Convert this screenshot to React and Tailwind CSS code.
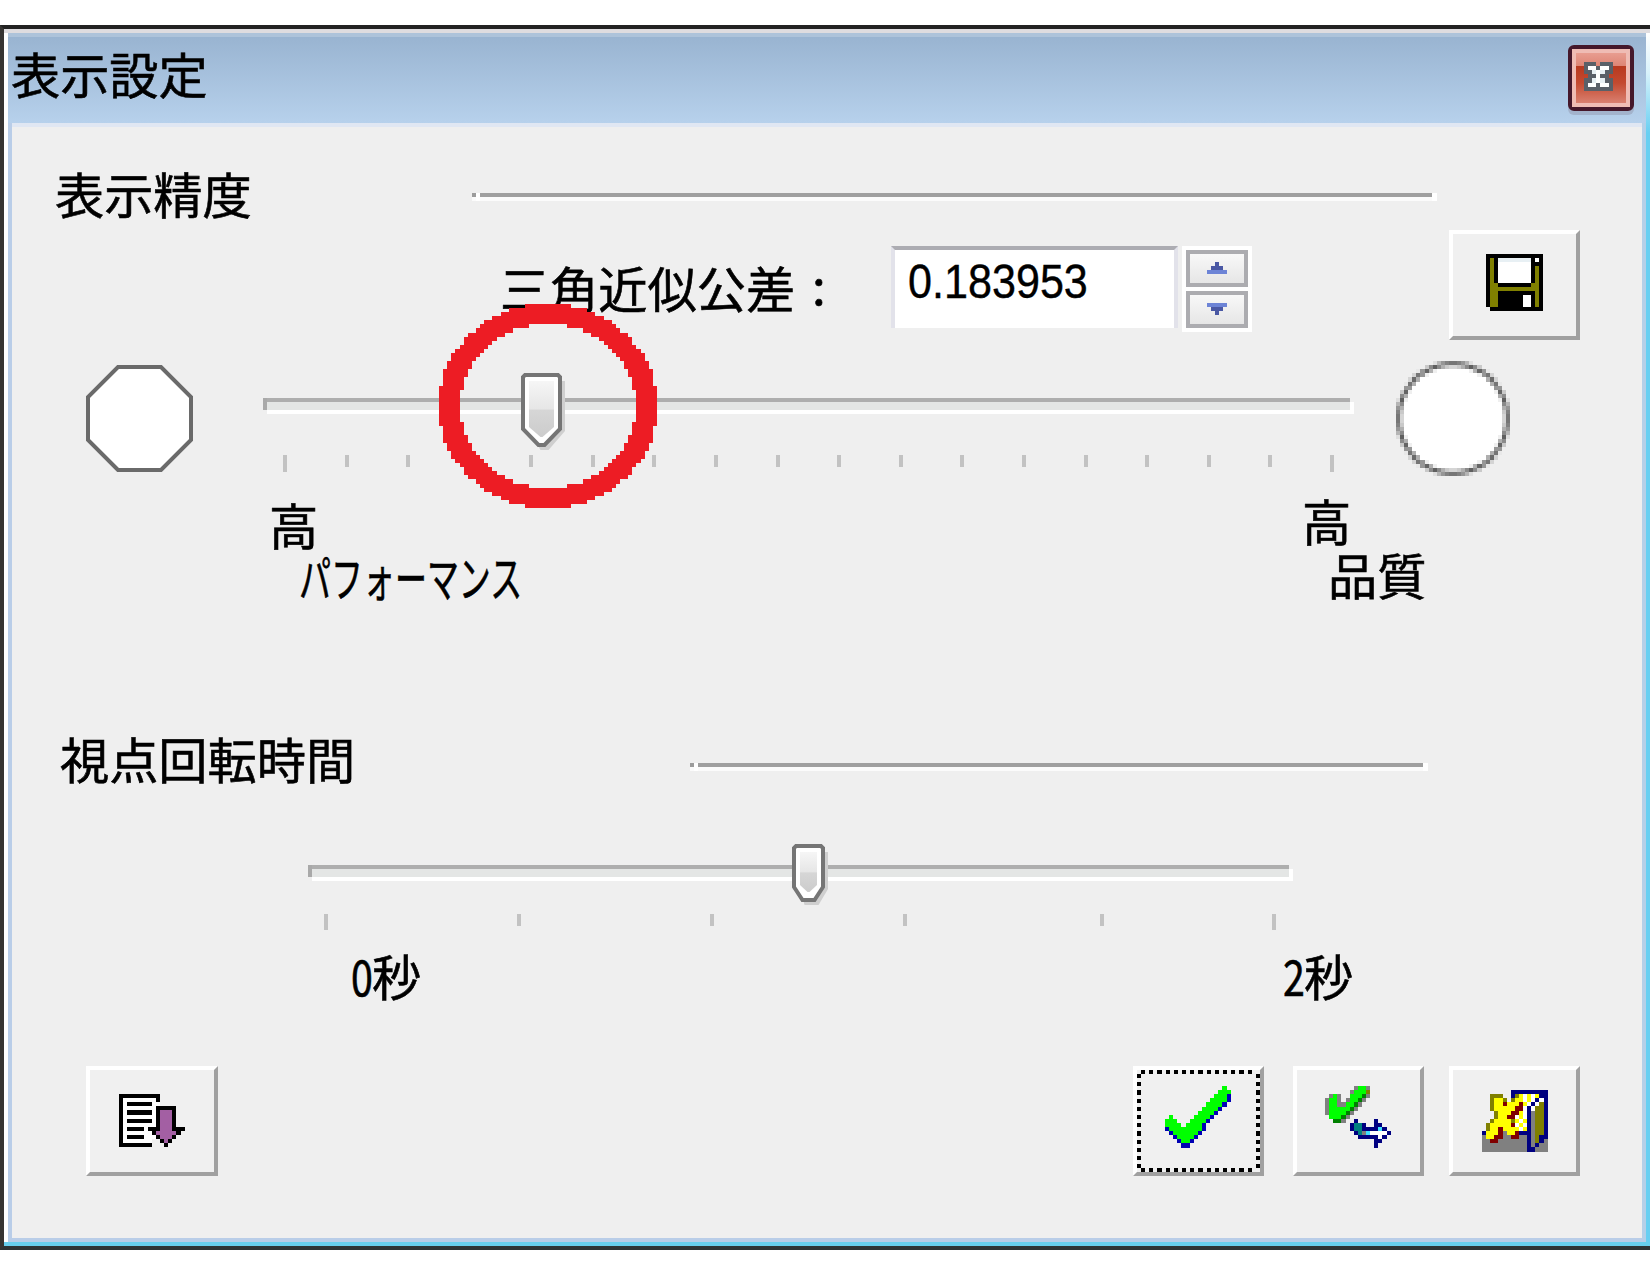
import React from 'react';

const CELL = 4.104;

const PALETTE = {
  K: '#000000', W: '#ffffff', O: '#808000', G: '#00ff00', B: '#0000b4', N: '#000080',
  P: '#a35fa3', Y: '#ffff00', R: '#800000', g: '#808080', D: '#008000', T: '#008080',
  C: '#40e0ff', S: '#5a6068', L: '#ffffa0', E: '#e8f0f4',
};

const SAVE = [
  'KKKKKKKKKKKKKK',
  'KOKEEEEEEEEKWK',
  'KOKWWWWWWWWKKK',
  'KOKWWWWWWWWKOK',
  'KOKWWWWWWWWKOK',
  'KOKWWWWWWWWKOK',
  'KOKWWWWWWWWKOK',
  'KOOKKKKKKKKOOK',
  'KOOOOOOOOOOOOK',
  'KOOKKKKKKKKKOK',
  'KOOKKKKKKWWKOK',
  'KOOKKKKKKWWKOK',
  'KOOKKKKKKWWKOK',
  '.KKKKKKKKKKKKK',
];

const LIST = [
  'KKKKKKKKKK......',
  'KWWWWWWWWK......',
  'KWKKKKKKWW......',
  'KWWWWWWWWKKKKK..',
  'KWKKKKKKWKPPPK..',
  'KWWWWWWWWKPPPK..',
  'KWKKKKKKWKPPPK..',
  'KWWWWWWWWKPPPK..',
  'KWKKKKWKKKPPPKKK',
  'KWWWWWWWKPPPPPK.',
  'KWKKKKWWWKPPPK..',
  'KWWWWWWW..KPK...',
  'KKKKKKKK...K....',
];

const CHECK = [
  '..............G.',
  '.............GGG',
  '............GGGB',
  '...........GGGGB',
  '..........GGGGB.',
  '.........GGGGB..',
  '........GGGGB...',
  '.G.....GGGGB....',
  'GGG...GGGGB.....',
  'GGGG.GGGGB......',
  'BGGGGGGGGB......',
  '.BGGGGGGB.......',
  '..BGGGGB........',
  '...BGGB.........',
  '....BB..........',
];

const APPLY = [
  '.......gGGg.....',
  '......gGGGO.....',
  '.gGg..GGGDg.....',
  'gGGg.gGGDg......',
  'gGGggGGDg.......',
  'gGGGGGDg........',
  'gGGGGDg.........',
  '.GGGDg..........',
  '..DDg..N....N...',
  '......NTTN..NN..',
  '......NTTNNNNCN.',
  '.......NTgCWWWWN',
  '........NNNNNWN.',
  '............NN..',
  '............N...',
];

const EXIT = [
  '.......NNNNNNNNN',
  '..OOO..NOYWYWYNN',
  '..OYYO.OYYWYWNWN',
  '..OYYRYYYRYWNWON',
  '..OYYYYYRRWNWOON',
  '...OYYYRRYWNgOON',
  '...OYYRRWYWNgOON',
  '..OYYYYOYWYNgOON',
  '.OYYYYYRWYWNgOON',
  '.OYYRYYYYWYNgOON',
  'NYYYRgYYRNNNgOON',
  'gYYRRggRRggNgONN',
  'ggRRgggggggNgONg',
  'gggggggggggNgNgg',
  'gggggggggggNNggg',
];

const CLOSE = [
  'SSS.SSS',
  'SWWSWWS',
  'SSEWESS',
  '.SSWSS.',
  'SSEWESS',
  'SWWSWWS',
  'SSSSSSS',
];

const UP = ['..N..', '.NNN.', 'MMMMM'];
const DOWN = ['MMMMM', '.NNN.', '..N..'];
const ARROW_COLORS = { N: '#4a58a4', M: '#6d84d6' };

function Pixels({ rows, colors = PALETTE, className = '' }) {
  const w = rows[0].length;
  const h = rows.length;
  const cells = [];
  rows.forEach((row, y) => {
    let x = 0;
    while (x < w) {
      const c = row[x];
      let end = x + 1;
      while (end < w && row[end] === c) end += 1;
      if (c !== '.') cells.push(<rect key={`${x}-${y}`} x={x} y={y} width={end - x} height="1" fill={colors[c]} />);
      x = end;
    }
  });
  return (
    <svg
      className={`shrink-0 ${className}`}
      width={w * CELL}
      height={h * CELL}
      viewBox={`0 0 ${w} ${h}`}
      preserveAspectRatio="none"
      shapeRendering="crispEdges"
    >
      {cells}
    </svg>
  );
}

/* Red ellipse ring built from square cells */
function Ring({ className }) {
  const cols = 53;
  const rows = 50;
  const cells = [];
  for (let y = 0; y < rows; y += 1) {
    for (let x = 0; x < cols; x += 1) {
      const dx = x + 0.5 - cols / 2;
      const dy = y + 0.5 - rows / 2;
      const outer = (dx / 26.6) ** 2 + (dy / 25.1) ** 2;
      const inner = (dx / 21.5) ** 2 + (dy / 20) ** 2;
      if (outer <= 1 && inner > 1) cells.push(<rect key={`${x}-${y}`} x={x} y={y} width="1" height="1" />);
    }
  }
  return (
    <svg className={className} viewBox={`0 0 ${cols} ${rows}`} preserveAspectRatio="none" shapeRendering="crispEdges" fill="#ed1c24">
      {cells}
    </svg>
  );
}

function Disc() {
  const n = 28;
  const cells = [];
  for (let y = 0; y < n; y += 1) {
    for (let x = 0; x < n; x += 1) {
      const d = Math.hypot(x + 0.5 - n / 2, y + 0.5 - n / 2);
      const stroke = Math.max(0, Math.min(1, 1.05 - Math.abs(d - 13.3)));
      const base = d < 13.3 ? 255 : 239;
      if (d < 13.3 || stroke > 0) {
        const v = Math.round(base + (95 - base) * stroke);
        cells.push(<rect key={`${x}-${y}`} x={x} y={y} width="1" height="1" fill={`rgb(${v},${v},${v})`} />);
      }
    }
  }
  return (
    <svg className="h-[115px] w-[114px] shrink-0" viewBox="0 0 28 28" preserveAspectRatio="none" shapeRendering="crispEdges">
      {cells}
    </svg>
  );
}

function Octagon() {
  return (
    <svg className="h-[107px] w-[107px] shrink-0" viewBox="0 0 107 107">
      <polygon points="32,2 75,2 105,32 105,75 75,105 32,105 2,75 2,32" fill="#fff" stroke="#6a6a6a" strokeWidth="4" />
    </svg>
  );
}

function Thumb({ className, w, h, cut, id, flat }) {
  const tip = w / 2;
  return (
    <svg className={className} viewBox={`0 0 ${w + 5} ${h + 5}`}>
      <defs>
        <linearGradient id={id} x1="0" y1="0" x2="0" y2="1">
          <stop offset="0" stopColor="#f6f6f6" />
          <stop offset="0.5" stopColor="#e6e6e6" />
          <stop offset="0.52" stopColor="#d6d6d6" />
          <stop offset="1" stopColor="#cccccc" />
        </linearGradient>
      </defs>
      <path d={`M8 8H${w + 3}V${h - cut + 2}L${tip + flat + 4} ${h + 3}H${tip - flat + 2}L8 ${h - cut}Z`} fill="#cfcfcf" />
      <path d={`M4 2H${w - 4}L${w - 2} 4V${h - cut}L${tip + flat} ${h - 2}H${tip - flat}L2 ${h - cut}V4Z`} fill="#fff" stroke="#757575" strokeWidth="4" />
      <path d={`M8 8H${w - 8}V${h - cut - 2}L${tip + 1} ${h - 10}H${tip - 1}L8 ${h - cut - 2}Z`} fill={`url(#${id})`} />
    </svg>
  );
}

const Text = ({ className = '', children }) => (
  <span className={`block h-[50px] shrink-0 whitespace-nowrap text-[49.2px] leading-[50px] [-webkit-text-stroke:0.6px_#000] ${className}`}>{children}</span>
);

const Rule = ({ className }) => (
  <div className={`flex h-2 shrink-0 ${className}`}>
    <div className="h-2 w-1 border-b-4 border-[#fbfbfb] bg-[#9c9c9c]" />
    <div className="h-2 w-1 bg-white" />
    <div className="h-2 flex-1 border-b-4 border-[#fbfbfb] bg-[#9f9f9f]" />
    <div className="h-2 w-[5px] bg-white" />
  </div>
);

const Track = ({ className }) => (
  <div className={`flex h-4 ${className}`}>
    <div className="h-3 w-1 bg-[#a9a9a9]" />
    <div className="h-4 flex-1 border-t-4 border-b-4 border-t-[#aeaeae] border-b-white bg-[#e4e6e5]" />
    <div className="mt-1 h-3 w-1 bg-white" />
  </div>
);

const PushButton = ({ className = '', children }) => (
  <button className={`relative flex h-[110px] w-[131px] shrink-0 border-4 border-t-white border-l-white border-r-[#a0a0a0] border-b-[#a0a0a0] bg-[#f0f0f0] ${className}`}>
    {children}
  </button>
);

const SpinButton = ({ rows }) => (
  <button className="flex h-[37px] w-[62px] items-center justify-center border-4 border-[#acacb0] bg-gradient-to-b from-[#f8f8f8] to-[#e6e6e6] outline-4 outline-white">
    <Pixels rows={rows} colors={ARROW_COLORS} />
  </button>
);

function TitleBar() {
  return (
    <header className="flex h-[90px] shrink-0 items-start justify-between border-t-4 border-[#adc3da] bg-gradient-to-b from-[#99b4d1] to-[#b7d1ec]">
      <Text className="mt-[11px] ml-[3px] text-black">表示設定</Text>
      <div className="mt-2 mr-3 h-[66px] w-[66px] rounded-md border-4 border-[#45182b] shadow-[0_4px_0_#a3b3cc]">
        <div className="flex h-full w-full items-start justify-start border-4 border-[#efbcb4] bg-[linear-gradient(to_bottom,#e89d90_0%,#dd8575_26%,#b8391f_27%,#c44a30_60%,#d98070_100%)] pt-[9px] pl-[8px]">
          <Pixels rows={CLOSE} />
        </div>
      </div>
    </header>
  );
}

function PrecisionSection() {
  return (
    <section className="h-[497px] shrink-0">
      <div className="flex h-[95px] items-start">
        <Text className="mt-[41px] ml-[43px] w-[417px]">表示精度</Text>
        <Rule className="mt-[66px] w-[965px]" />
      </div>

      <div className="flex h-[124px] items-start">
        <Text className="mt-[40px] ml-[488px] w-[312px]">三角近似公差</Text>
        <Text className="mt-[37px] w-[79px]">:</Text>
        <div className="mt-6 h-[82px] w-[287px] shrink-0 border-x-4 border-t-4 border-x-[#e2e2ea] border-t-[#acacb2] bg-white pl-[13px]">
          <div className="mt-[4px] w-[200px] origin-left scale-x-[0.88] font-['Liberation_Sans',sans-serif] text-[49px] leading-[54px] [-webkit-text-stroke:0.4px_#000]">0.183953</div>
        </div>
        <div className="mt-7 ml-2 flex h-[78px] w-[62px] shrink-0 flex-col gap-1">
          <SpinButton rows={UP} />
          <SpinButton rows={DOWN} />
        </div>
        <PushButton className="mt-2 ml-[201px] pt-5 pl-[33px]">
          <Pixels rows={SAVE} />
        </PushButton>
      </div>

      <div className="flex h-[144px] items-start">
        <div className="mt-[19px] ml-[74px] w-[177px] shrink-0">
          <Octagon />
        </div>
        <div className="relative h-full w-[1091px] shrink-0 pt-[52px]">
          <Track className="w-full" />
          <div className="mt-[41px] ml-5 flex w-[1051px] justify-between">
            {Array.from({ length: 18 }, (_, i) => (
              <div key={i} className={i === 0 || i === 17 ? 'h-[17px] w-1 bg-[#c2c2c2]' : 'h-3 w-1 bg-[#c2c2c2]'} />
            ))}
          </div>
          <Thumb id="precision-thumb" w={41} h={74} cut={18} flat={3} className="absolute top-[27px] left-[258px] h-[79px] w-[46px]" />
          <Ring className="absolute top-[-42px] left-[176px] h-[204px] w-[218px]" />
        </div>
        <div className="mt-[15px] ml-[42px]">
          <Disc />
        </div>
      </div>

      <div className="flex h-[130px] items-start">
        <div className="ml-[257px] w-[1033px] shrink-0">
          <Text className="mt-[9px]">高</Text>
          <Text className="mt-[2px] ml-[30px] origin-left scale-x-[0.65]">パフォーマンス</Text>
        </div>
        <div>
          <Text className="mt-[5px]">高</Text>
          <Text className="mt-[4px] ml-[26px]">品質</Text>
        </div>
      </div>
    </section>
  );
}

const TIME_TICKS = [
  { gap: 'ml-4', tall: true },
  { gap: 'ml-[189px]' },
  { gap: 'ml-[189px]' },
  { gap: 'ml-[189px]' },
  { gap: 'ml-[193px]' },
  { gap: 'ml-[168px]', tall: true },
];

function RotationSection() {
  return (
    <section className="h-[442px] shrink-0">
      <div className="flex h-[176px] items-start">
        <Text className="mt-[109px] ml-[48px] w-[630px]">視点回転時間</Text>
        <Rule className="mt-[139px] w-[738px]" />
      </div>
      <div className="relative ml-[296px] h-[140px] w-[985px] pt-[65px]">
        <Track className="w-full" />
        <div className="mt-[33px] flex">
          {TIME_TICKS.map((t, i) => (
            <div key={i} className={`${t.gap} w-1 bg-[#c2c2c2] ${t.tall ? 'h-4' : 'h-3'}`} />
          ))}
        </div>
        <Thumb id="time-thumb" w={33} h={58} cut={15} flat={6} className="absolute top-[44px] left-[484px] h-[63px] w-[38px]" />
      </div>
      <div className="flex items-start pt-[10px]">
        <div className="ml-[339px] flex w-[932px] shrink-0">
          <Text className="w-[21px] origin-left scale-x-[0.8]">0</Text>
          <Text>秒</Text>
        </div>
        <div className="flex">
          <Text className="w-[21px] origin-left scale-x-[0.8]">2</Text>
          <Text>秒</Text>
        </div>
      </div>
    </section>
  );
}

function Footer() {
  return (
    <footer className="flex items-start">
      <PushButton className="ml-[74px] w-[132px] pt-6 pl-[29px]">
        <Pixels rows={LIST} />
      </PushButton>
      <PushButton className="ml-[915px] pt-4 pl-[28px]">
        <Pixels rows={CHECK} />
        <svg className="absolute top-0 left-0 h-[102px] w-[123px]" viewBox="0 0 123 102" fill="none" stroke="#000" strokeWidth="4" strokeDasharray="4.1 4.1" shapeRendering="crispEdges">
          <path d="M4 2H119M4 100H119M2 4V98M121 4V98" />
        </svg>
      </PushButton>
      <PushButton className="ml-[29px] pt-4 pl-[28px]">
        <Pixels rows={APPLY} />
      </PushButton>
      <PushButton className="ml-[25px] pt-5 pl-[29px]">
        <Pixels rows={EXIT} />
      </PushButton>
    </footer>
  );
}

export default function App() {
  return (
    <div className="h-[1275px] w-[1650px] overflow-hidden bg-white pt-[25px] font-['Noto_Sans_CJK_JP',sans-serif] text-black">
      <div className="h-[1225px] border-y-4 border-l-4 border-t-[#222222] border-b-[#2e3436] border-l-[#363432]">
        <div className="flex h-full flex-col">
          <div className="h-1 shrink-0 bg-[#dedcdf]" />
          <div className="flex h-[1209px] shrink-0">
            <div className="w-1 shrink-0 bg-white" />
            <div className="flex flex-1 flex-col">
              <TitleBar />
              <main className="flex-1 border-x-4 border-b-4 border-r-[#b5d0e8] border-b-[#b9cde8] border-l-[#b9cde8] bg-[#efefef]">
                <div className="h-1 bg-[#e0e7f3]" />
                <PrecisionSection />
                <RotationSection />
                <Footer />
              </main>
            </div>
            <div className="w-1 shrink-0 bg-[linear-gradient(to_bottom,#ffffff_0px,#d8f2fb_40px,#67cff2_100px)]" />
          </div>
          <div className="h-1 shrink-0 bg-[#67cfee]" />
        </div>
      </div>
    </div>
  );
}
